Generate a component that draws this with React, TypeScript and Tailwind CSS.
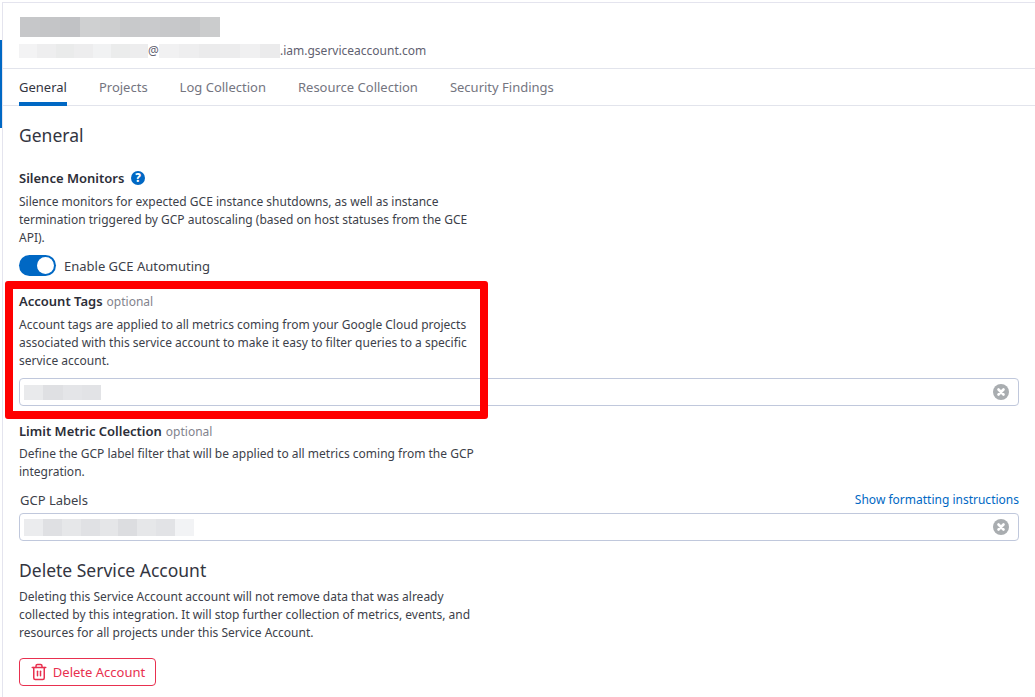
import { Trash2 } from 'lucide-react';

const TABS = ['General', 'Projects', 'Log Collection', 'Resource Collection', 'Security Findings'];

const NAME_BLUR = ['bg-[#c6c7c9]', 'bg-[#c4c5c7]', 'bg-[#c1c2c5]', 'bg-[#cfd0d1]', 'bg-[#cdcecf]', 'bg-[#c8c9cb]', 'bg-[#c9cacc]', 'bg-[#c7c8ca]', 'bg-[#c5c6c8]', 'bg-[#cbcccd]'];
const MAIL_BLUR_A = ['bg-[#f3f3f4]', 'bg-[#eeeeef]', 'bg-[#eaebeb]', 'bg-[#ededee]', 'bg-[#f1f2f3]', 'bg-[#ebecec]', 'bg-[#ededee]'];
const MAIL_BLUR_B = ['bg-[#f1f1f2]', 'bg-[#eeeeef]', 'bg-[#ebebec]', 'bg-[#ececed]', 'bg-[#f0f0f1]', 'bg-[#ebebec]'];
const TAG_BLUR = ['bg-[#e9eaec]', 'bg-[#dfe0e3]', 'bg-[#e4e5e8]', 'bg-[#e2e3e6]'];
const LABEL_BLUR = ['bg-[#ebecee]', 'bg-[#dfe0e3]', 'bg-[#e6e7e9]', 'bg-[#e0e1e4]', 'bg-[#e5e6e8]', 'bg-[#dcdde0]', 'bg-[#e6e7e9]', 'bg-[#e2e3e6]', 'bg-[#f2f3f5]'];

function Mosaic({ cells, className }: { cells: string[]; className: string }) {
  return (
    <span className={`flex ${className}`}>
      {cells.map((c, i) => (
        <span key={i} className={`flex-1 ${c}`} />
      ))}
    </span>
  );
}

function ClearIcon() {
  return (
    <svg className="w-4 h-4" viewBox="0 0 16 16">
      <circle cx="8" cy="8" r="8" fill="#a9adb0" />
      <path d="M5.5 5.5l5 5M10.5 5.5l-5 5" stroke="#fff" strokeWidth="2.6" strokeLinecap="round" />
    </svg>
  );
}

function Field({ blur }: { blur: React.ReactNode }) {
  return (
    <div className="h-7 rounded border border-[#c0c8dc] flex items-center justify-between pl-1 pr-[9px]">
      {blur}
      <ClearIcon />
    </div>
  );
}

export default function App() {
  return (
    <div className="relative w-[1035px] h-[697px] overflow-hidden bg-white text-[12px] leading-[18px] text-[#3d3f4a] font-['Noto_Sans',sans-serif]">
      {/* Sidebar edge */}
      <div className="absolute left-0 top-[40px] w-[2px] h-[88px] bg-[#0068c4]" />

      <div className="ml-[2px] mt-[2px] h-[695px] border-l border-t border-[#e4e4ee]">
        {/* Header */}
        <div className="h-[66px] border-b border-[#e2e4ec] pl-4 pt-[14px]">
          <Mosaic cells={NAME_BLUR} className="ml-[1px] w-[200px] h-5" />
          <div className="flex items-center mt-[5px] text-[#5f6170]">
            <Mosaic cells={MAIL_BLUR_A} className="w-[129px] h-[14px]" />
            <span className="w-[11px]">@</span>
            <Mosaic cells={MAIL_BLUR_B} className="w-[121px] h-[14px]" />
            <span>.iam.gserviceaccount.com</span>
          </div>
        </div>

        {/* Tabs */}
        <div className="h-[37px] border-b border-[#e2e4ec] pl-4 flex gap-8">
          {TABS.map((t, i) => (
            <div
              key={t}
              className={`h-[37px] pt-[9px] text-[13px] border-b-4 ${i === 0 ? 'border-[#0068c4] text-[#33353f]' : 'border-transparent text-[#74757f]'}`}
            >
              {t}
            </div>
          ))}
        </div>

        <div className="pl-4 pr-4">
          <h1 className="mt-[17px] text-[17.5px] leading-[24px] text-[#33353f]">General</h1>

          <div className="mt-[22px] flex items-center gap-[6px] font-semibold text-[13px] text-[#2c2e38]">
            Silence Monitors
            <svg className="w-4 h-4" viewBox="0 0 16 16">
              <circle cx="8" cy="8" r="7" fill="#0068c4" />
              <text x="8" y="12" textAnchor="middle" fontSize="11.5" fontWeight="800" fill="#fff" fontFamily="Noto Sans, sans-serif">?</text>
            </svg>
          </div>
          <p className="mt-[6px] w-[460px]">
            Silence monitors for expected GCE instance shutdowns, as well as instance termination triggered by GCP autoscaling (based on host statuses from the GCE API).
          </p>

          <div className="mt-[8px] flex items-center gap-2 text-[13px]">
            <div className="w-[37px] h-[21px] rounded-full bg-[#0068c4] flex items-center justify-end pr-[2px]">
              <span className="w-[17px] h-[17px] rounded-full bg-white" />
            </div>
            Enable GCE Automuting
          </div>

          <div className="mt-[16px] flex items-baseline gap-1">
            <span className="font-semibold text-[13px] text-[#2c2e38]">Account Tags</span>
            <span className="text-[#82838d]">optional</span>
          </div>
          <p className="mt-[5px] w-[460px]">
            Account tags are applied to all metrics coming from your Google Cloud projects associated with this service account to make it easy to filter queries to a specific service account.
          </p>
          <div className="mt-[8px]">
            <Field blur={<Mosaic cells={TAG_BLUR} className="w-[77px] h-[15px]" />} />
          </div>

          <div className="mt-[16px] flex items-baseline gap-1">
            <span className="font-semibold text-[13px] text-[#2c2e38]">Limit Metric Collection</span>
            <span className="text-[#82838d]">optional</span>
          </div>
          <p className="mt-[4px] w-[460px]">
            Define the GCP label filter that will be applied to all metrics coming from the GCP integration.
          </p>

          <div className="mt-[10px] flex items-center justify-between text-[13px] pl-px">
            <span>GCP Labels</span>
            <a className="text-[12px] text-[#0068c4]">Show formatting instructions</a>
          </div>
          <div className="mt-[4px]">
            <Field blur={<Mosaic cells={LABEL_BLUR} className="w-[170px] h-[17px]" />} />
          </div>

          <h2 className="mt-[17px] text-[17.5px] leading-[24px] text-[#33353f]">Delete Service Account</h2>
          <p className="mt-[6px] w-[460px]">
            Deleting this Service Account account will not remove data that was already collected by this integration. It will stop further collection of metrics, events, and resources for all projects under this Service Account.
          </p>

          <button className="mt-[16px] w-[137px] h-7 rounded border border-[#e8304f] text-[#e8304f] text-[13px] flex items-center justify-center gap-[5px]">
            <Trash2 className="w-[18px] h-[18px]" strokeWidth={2} />
            Delete Account
          </button>
        </div>
      </div>

      {/* Red annotation over the screenshot */}
      <div className="absolute left-[5px] top-[281px] w-[483px] h-[138px] border-[8px] border-[#ff0000] rounded-[3px]" />
    </div>
  );
}
